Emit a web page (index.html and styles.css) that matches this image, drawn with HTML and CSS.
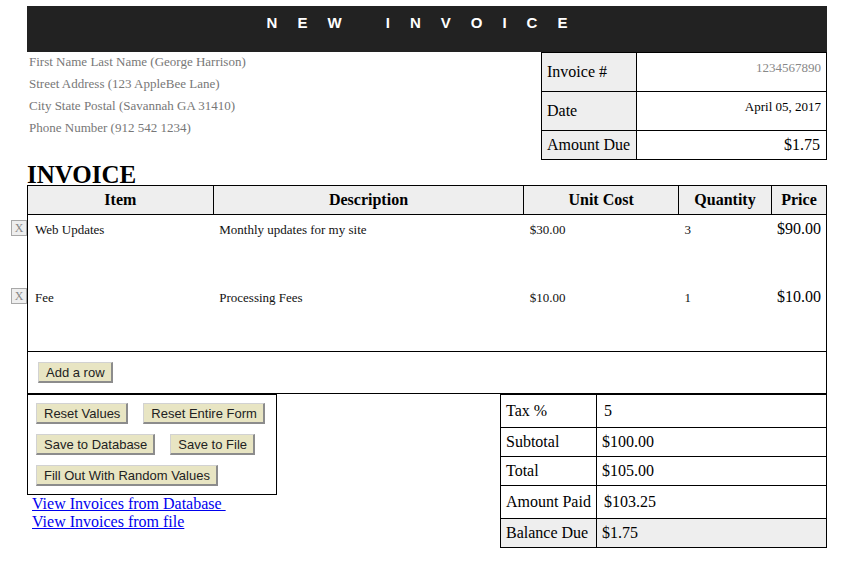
FILE: index.html
```html
<!DOCTYPE html>
<html>
<head>
<meta charset="utf-8">
<title>Invoice</title>
<link rel="stylesheet" href="styles.css">
</head>
<body>
<div class="page">
  <div class="banner">NEW INVOICE</div>

  <div class="top">
    <div class="address">
      <div>First Name Last Name (George Harrison)</div>
      <div>Street Address (123 AppleBee Lane)</div>
      <div>City State Postal (Savannah GA 31410)</div>
      <div>Phone Number (912 542 1234)</div>
    </div>
    <table class="meta">
      <tr>
        <td class="meta-label">Invoice #</td>
        <td class="meta-value"><div class="meta-field muted">1234567890</div></td>
      </tr>
      <tr>
        <td class="meta-label">Date</td>
        <td class="meta-value"><div class="meta-field">April 05, 2017</div></td>
      </tr>
      <tr>
        <td class="meta-label">Amount Due</td>
        <td class="meta-value due">$1.75</td>
      </tr>
    </table>
  </div>

  <h1 class="title">INVOICE</h1>

  <table class="items">
    <colgroup>
      <col class="c-item">
      <col class="c-desc">
      <col class="c-cost">
      <col class="c-qty">
      <col class="c-price">
    </colgroup>
    <thead>
      <tr>
        <th>Item</th>
        <th>Description</th>
        <th>Unit Cost</th>
        <th>Quantity</th>
        <th>Price</th>
      </tr>
    </thead>
    <tbody>
      <tr class="item-row">
        <td><div class="field field-name"><span class="delete">X</span>Web Updates</div></td>
        <td><div class="field">Monthly updates for my site</div></td>
        <td><div class="field">$30.00</div></td>
        <td><div class="field">3</div></td>
        <td class="price">$90.00</td>
      </tr>
      <tr class="item-row">
        <td><div class="field field-name"><span class="delete">X</span>Fee</div></td>
        <td><div class="field">Processing Fees</div></td>
        <td><div class="field">$10.00</div></td>
        <td><div class="field">1</div></td>
        <td class="price">$10.00</td>
      </tr>
      <tr class="add-row">
        <td colspan="5"><button class="btn" type="button">Add a row</button></td>
      </tr>
    </tbody>
  </table>

  <div class="bottom">
    <div class="left-col">
      <div class="actions">
        <div class="action-row">
          <button class="btn" type="button">Reset Values</button>
          <button class="btn" type="button">Reset Entire Form</button>
        </div>
        <div class="action-row">
          <button class="btn" type="button">Save to Database</button>
          <button class="btn" type="button">Save to File</button>
        </div>
        <div class="action-row">
          <button class="btn" type="button">Fill Out With Random Values</button>
        </div>
      </div>
      <div class="links">
        <a href="#">View Invoices from Database&nbsp;</a><br>
        <a href="#">View Invoices from file</a>
      </div>
    </div>

    <table class="totals">
      <tr class="tall">
        <td class="t-label">Tax %</td>
        <td class="t-value"><div class="t-input">5</div></td>
      </tr>
      <tr>
        <td class="t-label">Subtotal</td>
        <td class="t-value">$100.00</td>
      </tr>
      <tr>
        <td class="t-label">Total</td>
        <td class="t-value">$105.00</td>
      </tr>
      <tr class="tall">
        <td class="t-label">Amount Paid</td>
        <td class="t-value"><div class="t-input">$103.25</div></td>
      </tr>
      <tr class="balance">
        <td class="t-label">Balance Due</td>
        <td class="t-value">$1.75</td>
      </tr>
    </table>
  </div>
</div>
</body>
</html>
```

FILE: styles.css
```css
* {
  box-sizing: border-box;
}

body {
  margin: 0;
  background: #fff;
  color: #000;
  font-family: "Liberation Serif", "Times New Roman", serif;
}

.page {
  width: 800px;
  margin: 0 0 0 27px;
  padding-top: 6px;
}

.banner {
  height: 46px;
  padding-top: 8px;
  background: #222;
  color: #fff;
  text-align: center;
  font: bold 15px/18px "Liberation Sans", Arial, sans-serif;
  letter-spacing: 20px;
}

.top {
  display: flex;
  justify-content: space-between;
  align-items: flex-start;
}

.address {
  width: 250px;
  padding-left: 2px;
  margin-top: -1px;
  font-size: 13px;
  line-height: 22px;
  color: #777;
}

table {
  border-collapse: collapse;
}

.meta {
  width: 286px;
}

.meta td {
  border: 1px solid #000;
  padding: 5px;
}

.meta-label {
  width: 95px;
  background: #eee;
  font-size: 16px;
  line-height: 18px;
  vertical-align: middle;
}

.meta-value {
  vertical-align: top;
  text-align: right;
}

.meta-field {
  height: 28px;
  padding: 2px 0 2px 2px;
  font-size: 13px;
  line-height: 15px;
  color: #000;
}

.meta-field.muted {
  color: #888;
}

.meta-value.due {
  font-size: 16px;
  line-height: 18px;
  padding-right: 6px;
}

.title {
  margin: 0;
  height: 25px;
  font-size: 25px;
  line-height: 30px;
  font-weight: bold;
}

.items {
  width: 800px;
  border: 1px solid #000;
}

.c-item { width: 186px; }
.c-desc { width: 311px; }
.c-cost { width: 155px; }
.c-qty { width: 93px; }
.c-price { width: 55px; }

.items th {
  border: 1px solid #000;
  background: #eee;
  padding: 5px;
  font-size: 16px;
  line-height: 18px;
  font-weight: bold;
  text-align: center;
}

.item-row td {
  border: none;
  padding: 5px;
  vertical-align: top;
}

.field {
  position: relative;
  height: 58px;
  padding: 2px 2px 2px 1px;
  font-size: 13px;
  line-height: 15px;
  color: #111;
}

.field.field-name {
  padding-left: 2px;
}

.delete {
  position: absolute;
  left: -22px;
  top: 0;
  width: 16px;
  height: 16px;
  border: 1px solid #a8a8a8;
  background: #eee;
  color: #888;
  font-size: 12px;
  line-height: 14px;
  text-align: center;
}

.item-row td.price {
  font-size: 16px;
  line-height: 18px;
  text-align: right;
}

.add-row td {
  border-top: 1px solid #000;
  padding: 10px;
}

.btn {
  display: inline-block;
  margin: 0;
  padding: 2px 6px 1px 7px;
  background: #e8e5c3;
  color: #222;
  font: 13px/15px "Liberation Sans", Arial, sans-serif;
  border-top: 1px solid #d2d2d2;
  border-left: 1px solid #d2d2d2;
  border-right: 2px solid #8c8c8c;
  border-bottom: 2px solid #8c8c8c;
  border-radius: 0;
}

.bottom {
  display: flex;
  justify-content: space-between;
  align-items: flex-start;
}

.left-col {
  width: 250px;
}

.actions {
  border: 1px solid #000;
  padding: 8px;
  display: flex;
  flex-direction: column;
  gap: 10px;
}

.action-row {
  display: flex;
  gap: 15px;
}

.links {
  padding-left: 5px;
  font-size: 16px;
  line-height: 18px;
}

.links a {
  color: #00e;
  text-decoration: underline;
}

.totals {
  width: 327px;
}

.totals td {
  border: 1px solid #000;
  padding: 5px;
  font-size: 16px;
  line-height: 18px;
  vertical-align: middle;
}

.totals td.t-label {
  width: 96px;
  white-space: nowrap;
}

.t-input {
  height: 22px;
  padding: 2px;
}

.balance td {
  background: #eee;
}
```
